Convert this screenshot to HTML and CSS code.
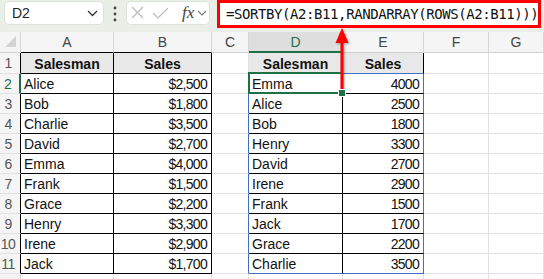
FILE: index.html
```html
<!DOCTYPE html>
<html lang="en">
<head>
  <meta charset="UTF-8">
  <title>SORTBY RANDARRAY</title>
  <link rel="stylesheet" href="styles.css">
</head>
<body>

  <!-- ===== Formula bar ===== -->
  <div class="topbar">
    <div class="namebox">
      <span>D2</span>
      <svg width="11" height="7" viewBox="0 0 11 7"><polyline points="1,1 5.5,5.5 10,1" fill="none" stroke="#333" stroke-width="1.3"/></svg>
    </div>
    <div class="dots">
      <svg width="4" height="16" viewBox="0 0 4 16"><circle cx="2" cy="2" r="1.4" fill="#444"/><circle cx="2" cy="8" r="1.4" fill="#444"/><circle cx="2" cy="14" r="1.4" fill="#444"/></svg>
    </div>
    <div class="fnbox">
      <svg width="44" height="22" viewBox="0 0 44 22">
        <line x1="1" y1="5" x2="12" y2="16" stroke="#bcbcbc" stroke-width="1.2"/>
        <line x1="12" y1="5" x2="1" y2="16" stroke="#bcbcbc" stroke-width="1.2"/>
        <polyline points="22,11 27,16 37,6" fill="none" stroke="#bcbcbc" stroke-width="1.2"/>
      </svg>
      <span class="fx">fx</span>
      <svg class="fnchev" width="10" height="6" viewBox="0 0 10 6"><polyline points="1,1 5,5 9,1" fill="none" stroke="#777" stroke-width="1.1"/></svg>
    </div>
    <div class="formula">=SORTBY(A2:B11,RANDARRAY(ROWS(A2:B11)))</div>
  </div>

  <!-- ===== Sheet ===== -->
  <div class="sheet">
    <div class="ch corner"><svg width="12" height="12" viewBox="0 0 12 12"><polygon points="11,0 11,11 0,11" fill="#d3d3d3"/></svg></div>
    <div class="ch edge">A</div>
    <div class="ch edge">B</div>
    <div class="ch">C</div>
    <div class="ch on">D</div>
    <div class="ch">E</div>
    <div class="ch">F</div>
    <div class="ch">G</div>

    <div class="rh edge">1</div>
    <div class="c t hd">Salesman</div>
    <div class="c t hd">Sales</div>
    <div class="c"></div>
    <div class="c t hd">Salesman</div>
    <div class="c t hd sp-b">Sales</div>
    <div class="c"></div>
    <div class="c"></div>

    <div class="rh edge on">2</div>
    <div class="c t">Alice</div>
    <div class="c t n">$2,500</div>
    <div class="c sp-r"></div>
    <div class="c t act">Emma</div>
    <div class="c t n sp-r">4000</div>
    <div class="c"></div>
    <div class="c"></div>

    <div class="rh edge">3</div>
    <div class="c t">Bob</div>
    <div class="c t n">$1,800</div>
    <div class="c sp-r"></div>
    <div class="c t">Alice</div>
    <div class="c t n sp-r">2500</div>
    <div class="c"></div>
    <div class="c"></div>

    <div class="rh edge">4</div>
    <div class="c t">Charlie</div>
    <div class="c t n">$3,500</div>
    <div class="c sp-r"></div>
    <div class="c t">Bob</div>
    <div class="c t n sp-r">1800</div>
    <div class="c"></div>
    <div class="c"></div>

    <div class="rh edge">5</div>
    <div class="c t">David</div>
    <div class="c t n">$2,700</div>
    <div class="c sp-r"></div>
    <div class="c t">Henry</div>
    <div class="c t n sp-r">3300</div>
    <div class="c"></div>
    <div class="c"></div>

    <div class="rh edge">6</div>
    <div class="c t">Emma</div>
    <div class="c t n">$4,000</div>
    <div class="c sp-r"></div>
    <div class="c t">David</div>
    <div class="c t n sp-r">2700</div>
    <div class="c"></div>
    <div class="c"></div>

    <div class="rh edge">7</div>
    <div class="c t">Frank</div>
    <div class="c t n">$1,500</div>
    <div class="c sp-r"></div>
    <div class="c t">Irene</div>
    <div class="c t n sp-r">2900</div>
    <div class="c"></div>
    <div class="c"></div>

    <div class="rh edge">8</div>
    <div class="c t">Grace</div>
    <div class="c t n">$2,200</div>
    <div class="c sp-r"></div>
    <div class="c t">Frank</div>
    <div class="c t n sp-r">1500</div>
    <div class="c"></div>
    <div class="c"></div>

    <div class="rh edge">9</div>
    <div class="c t">Henry</div>
    <div class="c t n">$3,300</div>
    <div class="c sp-r"></div>
    <div class="c t">Jack</div>
    <div class="c t n sp-r">1700</div>
    <div class="c"></div>
    <div class="c"></div>

    <div class="rh edge">10</div>
    <div class="c t">Irene</div>
    <div class="c t n">$2,900</div>
    <div class="c sp-r"></div>
    <div class="c t">Grace</div>
    <div class="c t n sp-r">2200</div>
    <div class="c"></div>
    <div class="c"></div>

    <div class="rh edge">11</div>
    <div class="c t">Jack</div>
    <div class="c t n">$1,700</div>
    <div class="c sp-r"></div>
    <div class="c t sp-b">Charlie</div>
    <div class="c t n sp-r sp-b">3500</div>
    <div class="c"></div>
    <div class="c"></div>

    <!-- linha 12 (só aparece um pedaço) -->
    <div class="rh"></div>
    <div class="c"></div>
    <div class="c"></div>
    <div class="c"></div>
    <div class="c"></div>
    <div class="c"></div>
    <div class="c"></div>
    <div class="c"></div>
  </div>

  <!-- Seta vermelha apontando para a fórmula -->
  <svg class="arrow" width="20" height="70" viewBox="0 0 20 70">
    <rect x="8.5" y="14" width="3" height="53" fill="#f00"/>
    <polygon points="10,2 3.5,17 16.5,17" fill="#f00"/>
  </svg>

</body>
</html>
```

FILE: styles.css
```css
/* ===== Base ===== */
* {
  box-sizing: border-box;
}

body {
  margin: 0;
  width: 544px;
  height: 279px;
  overflow: hidden;
  position: relative;
  background: #ffffff;
  font-family: "Liberation Sans", Arial, sans-serif;
  font-size: 14px;
  color: #111;
}

/* ===== Formula bar ===== */
.topbar {
  height: 32px;
  background: #e9eee6;
  display: flex;
  align-items: flex-start;
  padding-left: 4px;
}

.namebox {
  margin-top: 1px;
  width: 100px;
  height: 24px;
  background: #fff;
  border: 1px solid #dde2da;
  border-radius: 5px;
  display: flex;
  align-items: center;
  justify-content: space-between;
  padding: 0 5px 0 7px;
  color: #222;
}

.dots {
  width: 22px;
  height: 27px;
  display: flex;
  align-items: center;
  justify-content: center;
}

.fnbox {
  margin-top: 1px;
  width: 84px;
  height: 24px;
  background: #fff;
  border: 1px solid #dde2da;
  border-radius: 5px;
  display: flex;
  align-items: center;
  padding-left: 4px;
}

.fx {
  margin-left: 7px;
  font-family: "Liberation Serif", serif;
  font-style: italic;
  font-size: 17px;
  color: #444;
  line-height: 20px;
}

.fnchev {
  margin-left: 3px;
}

.formula {
  margin-left: 7px;
  width: 324px;
  height: 28px;
  background: #fff;
  border: 3px solid #ff0000;
  padding-left: 6px;
  font-family: "DejaVu Sans Mono", "Liberation Mono", monospace;
  font-size: 14px;
  letter-spacing: -0.42px;
  line-height: 22px;
  color: #111;
  white-space: nowrap;
}

/* ===== Sheet ===== */
.sheet {
  display: grid;
  grid-template-columns: 21px 93px 98px 37px 94px 81px 65px 1fr;
  grid-template-rows: 21px 21px repeat(11, 20px);
}

.ch,
.rh,
.c {
  display: flex;
  white-space: nowrap;
  overflow: hidden;
  border-right: 1px solid #e1e1e1;
  border-bottom: 1px solid #e1e1e1;
}

.ch {
  background: #f5f5f5;
  color: #444;
  align-items: center;
  justify-content: center;
  border-right-color: #d6d6d6;
  border-bottom-color: #cfcfcf;
}

.ch.corner {
  align-items: flex-end;
  justify-content: flex-end;
  padding: 0 3px 4px 0;
}

.ch.edge {
  border-bottom-color: #000;
}

.ch.on {
  background: #dedede;
  color: #1e7145;
  border-bottom: 2px solid #1e7145;
}

.rh {
  background: #f5f5f5;
  color: #555;
  align-items: center;
  justify-content: center;
  padding-right: 4px;
  letter-spacing: -0.6px;
  border-right-color: #d6d6d6;
}

.rh.edge {
  border-right-color: #000;
}

.rh.on {
  color: #1e7145;
  border-right: 2px solid #1e7145;
}

.c {
  align-items: flex-end;
  padding: 0 3px;
  line-height: 17px;
}

/* tabela com bordas pretas */
.t {
  border-right-color: #000;
  border-bottom-color: #000;
}

.hd {
  background: #e8e8e8;
  font-weight: bold;
  justify-content: center;
}

.n {
  justify-content: flex-end;
  padding-right: 4px;
  letter-spacing: -0.7px;
}

/* borda azul do intervalo despejado */
.sp-r {
  border-right-color: #3f6fc2;
}

.sp-b {
  border-bottom-color: #3f6fc2;
}

/* célula ativa D2 */
.act {
  position: relative;
  overflow: visible;
}

.act::after {
  content: "";
  position: absolute;
  left: -1px;
  top: -2px;
  right: -1px;
  bottom: -1px;
  border: 2px solid #1e7145;
}

.act::before {
  content: "";
  position: absolute;
  right: -4px;
  bottom: -4px;
  width: 6px;
  height: 6px;
  background: #1e7145;
  border: 1px solid #fff;
  z-index: 1;
}

/* ===== Seta ===== */
.arrow {
  position: absolute;
  left: 332px;
  top: 26px;
  filter: drop-shadow(1px 1px 1px rgba(0, 0, 0, 0.35));
}
```
